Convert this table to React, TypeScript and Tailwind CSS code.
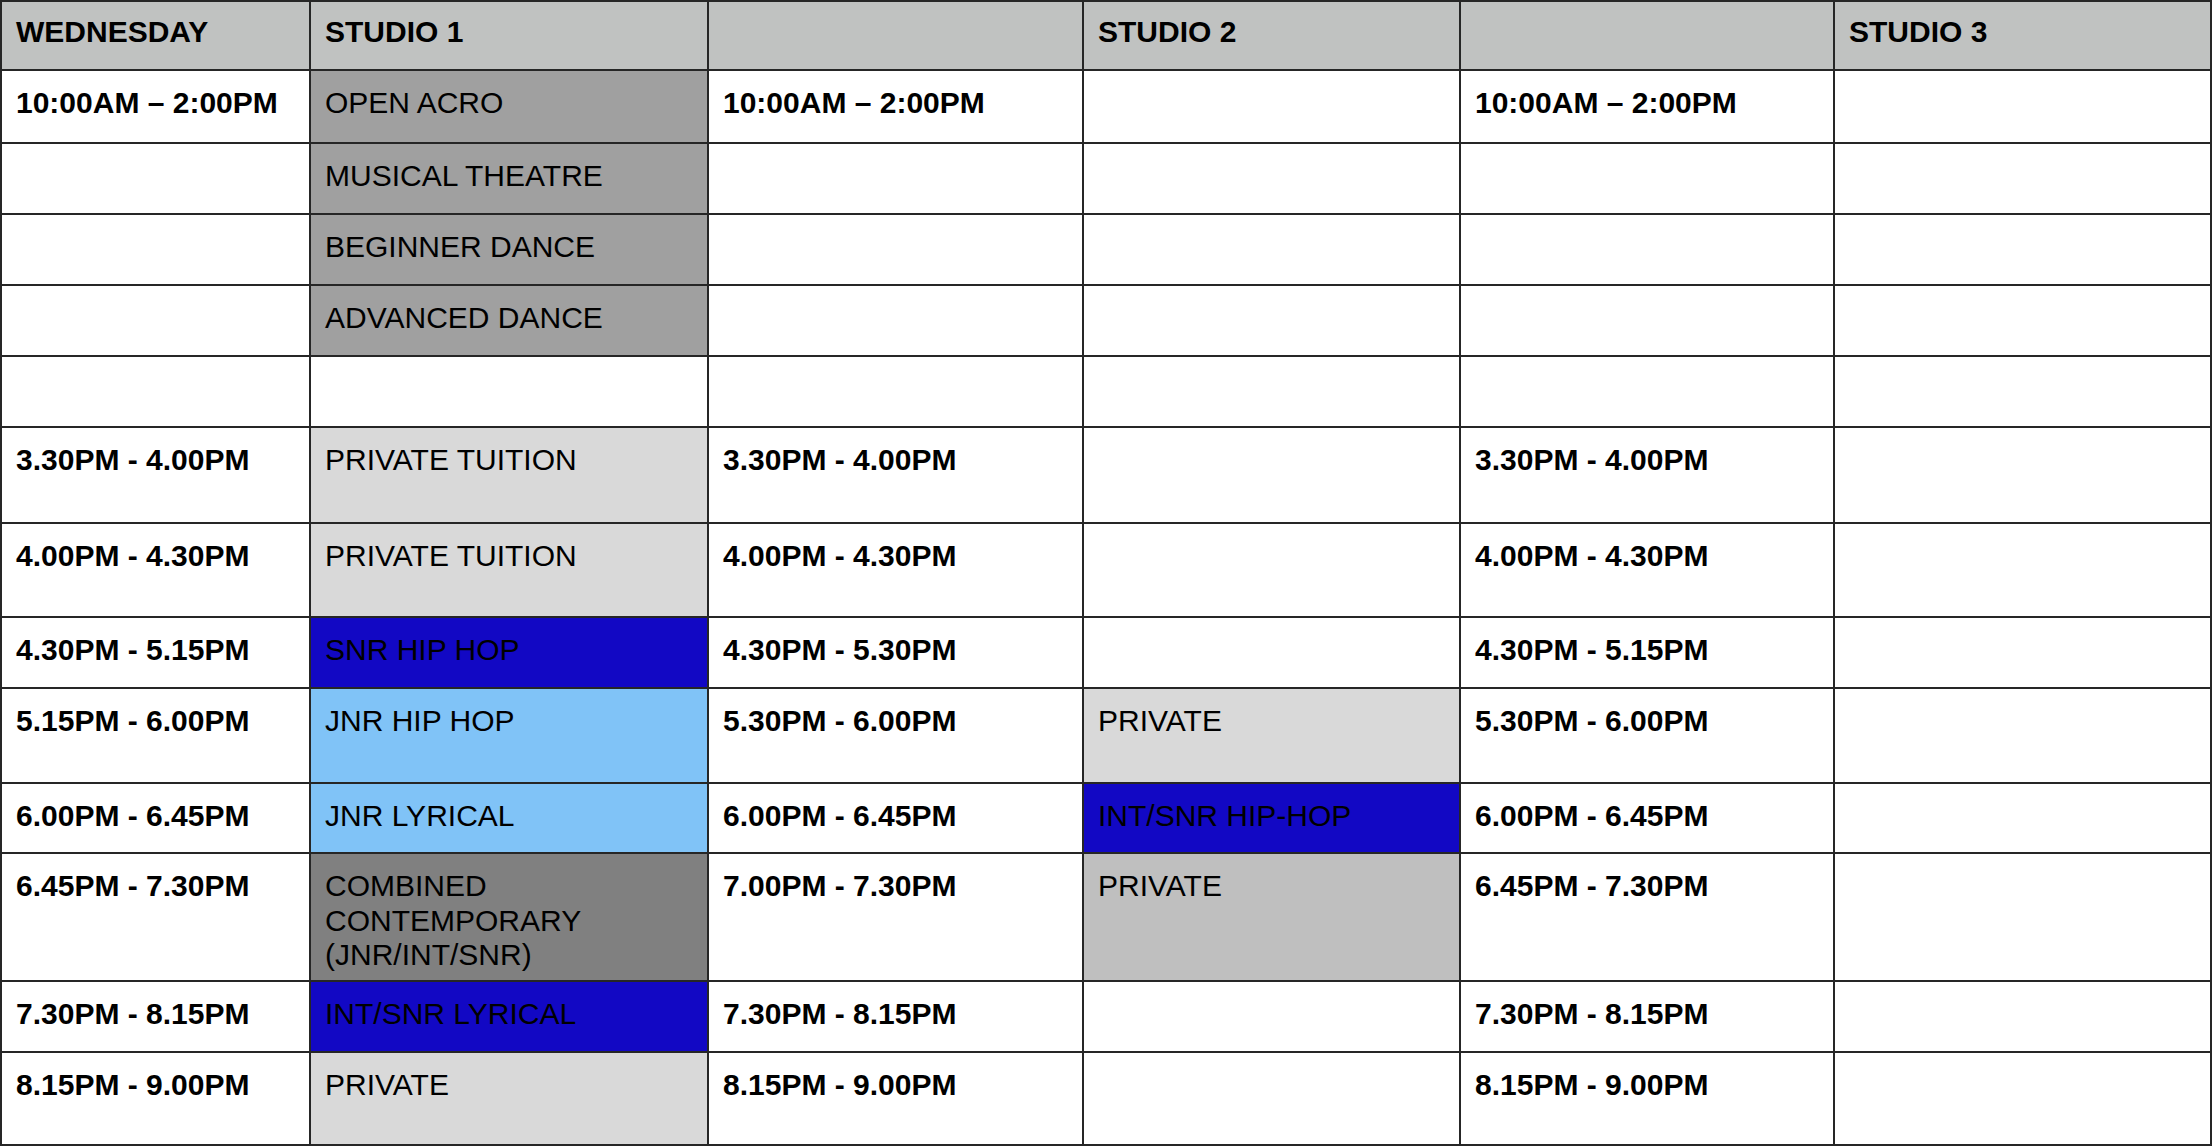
type Cell = {
  text?: string;
  bold?: boolean;
  bg?: string;
};

const HEAD = "bg-[#c0c2c1]";
const GREY = "bg-[#a0a0a0]";
const LIGHT = "bg-[#d9d9d9]";
const MID = "bg-[#bfbfbf]";
const DARK = "bg-[#808080]";
const BLUE = "bg-[#1208c4]";
const SKY = "bg-[#80c3f7]";

const t = (text: string): Cell => ({ text, bold: true });
const c = (text: string, bg: string): Cell => ({ text, bg });
const e: Cell = {};

const header: Cell[] = [
  { text: "WEDNESDAY", bold: true, bg: HEAD },
  { text: "STUDIO 1", bold: true, bg: HEAD },
  { bg: HEAD },
  { text: "STUDIO 2", bold: true, bg: HEAD },
  { bg: HEAD },
  { text: "STUDIO 3", bold: true, bg: HEAD },
];

const rows: Cell[][] = [
  [t("10:00AM – 2:00PM"), c("OPEN ACRO", GREY), t("10:00AM – 2:00PM"), e, t("10:00AM – 2:00PM"), e],
  [e, c("MUSICAL THEATRE", GREY), e, e, e, e],
  [e, c("BEGINNER DANCE", GREY), e, e, e, e],
  [e, c("ADVANCED DANCE", GREY), e, e, e, e],
  [e, e, e, e, e, e],
  [t("3.30PM - 4.00PM"), c("PRIVATE TUITION", LIGHT), t("3.30PM - 4.00PM"), e, t("3.30PM - 4.00PM"), e],
  [t("4.00PM - 4.30PM"), c("PRIVATE TUITION", LIGHT), t("4.00PM - 4.30PM"), e, t("4.00PM - 4.30PM"), e],
  [t("4.30PM - 5.15PM"), c("SNR HIP HOP", BLUE), t("4.30PM - 5.30PM"), e, t("4.30PM - 5.15PM"), e],
  [t("5.15PM - 6.00PM"), c("JNR HIP HOP", SKY), t("5.30PM - 6.00PM"), c("PRIVATE", LIGHT), t("5.30PM - 6.00PM"), e],
  [t("6.00PM - 6.45PM"), c("JNR LYRICAL", SKY), t("6.00PM - 6.45PM"), c("INT/SNR HIP-HOP", BLUE), t("6.00PM - 6.45PM"), e],
  [t("6.45PM - 7.30PM"), c("COMBINED CONTEMPORARY (JNR/INT/SNR)", DARK), t("7.00PM - 7.30PM"), c("PRIVATE", MID), t("6.45PM - 7.30PM"), e],
  [t("7.30PM - 8.15PM"), c("INT/SNR LYRICAL", BLUE), t("7.30PM - 8.15PM"), e, t("7.30PM - 8.15PM"), e],
  [t("8.15PM - 9.00PM"), c("PRIVATE", LIGHT), t("8.15PM - 9.00PM"), e, t("8.15PM - 9.00PM"), e],
];

function TimetableCell({ cell, head }: { cell: Cell; head?: boolean }) {
  return (
    <div
      className={`${cell.bg ?? "bg-white"} ${head ? "pt-[13px]" : "pt-[15px]"} pl-[14px] pr-2 text-[30px] leading-[34.5px] text-black ${
        cell.bold ? "font-bold" : "font-normal"
      }`}
    >
      {cell.text}
    </div>
  );
}

export default function App() {
  return (
    <div className="w-[2212px] h-[1146px] bg-white font-['Liberation_Sans',Arial,sans-serif]">
      <div className="grid grid-cols-[307px_396px_373px_375px_372px_375px] grid-rows-[67px_71px_69px_69px_69px_69px_94px_92px_69px_93px_68px_126px_69px_91px] gap-[2px] p-[2px] bg-[#262626]">
        {header.map((cell, i) => (
          <TimetableCell key={`h${i}`} cell={cell} head />
        ))}
        {rows.map((row, r) =>
          row.map((cell, i) => <TimetableCell key={`${r}-${i}`} cell={cell} />)
        )}
      </div>
    </div>
  );
}
